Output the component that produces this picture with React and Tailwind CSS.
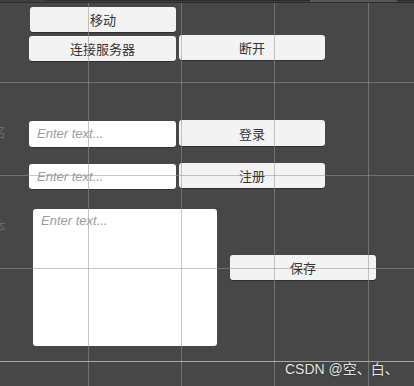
import React from "react";

const cjk = { fontFamily: '"Noto Sans CJK SC", "Noto Sans", sans-serif' };

function Btn({ children, className = "" }) {
  return (
    <div
      className={`flex items-center justify-center rounded-[3px] bg-[#f3f3f3] text-[13px] leading-none text-[#333333] shadow-[0_1px_0_#2e2e2e] ${className}`}
      style={cjk}
    >
      {children}
    </div>
  );
}

function Input({ className = "" }) {
  return (
    <div
      className={`flex items-center rounded-[3px] bg-white pl-[8px] text-[13px] italic text-[#9c9c9c] shadow-[0_1px_0_#333] ${className}`}
      style={{ fontFamily: '"Liberation Sans", Arial, sans-serif' }}
    >
      Enter text...
    </div>
  );
}

function Label({ text, className = "" }) {
  return (
    <div
      className={`flex w-[6px] shrink-0 justify-end overflow-hidden whitespace-nowrap text-[13px] leading-[16px] text-[#6a6a6a] ${className}`}
      style={cjk}
    >
      {text}
    </div>
  );
}

export default function App() {
  return (
    <div className="relative h-[386px] w-[414px] overflow-hidden bg-[#474747]">
      {/* top strip */}
      <div className="flex h-[3px] w-full">
        <div className="h-[3px] w-[46px] border-b border-[#2c2c2c] bg-[#3e3e3e]" />
        <div className="h-[3px] w-[264px] border-t border-b border-t-[#2c2c2c] border-b-[#2c2c2c] bg-[#3e3e3e]" />
        <div className="h-[3px] w-[87px] border-b border-[#2c2c2c] bg-[#575757]" />
        <div className="h-[3px] flex-1 border-t border-b border-t-[#2c2c2c] border-b-[#2c2c2c] bg-[#3e3e3e]" />
      </div>

      <div className="flex flex-col">
        <div className="ml-[30px] mt-[4px]">
          <Btn className="h-[25px] w-[146px]">移动</Btn>
        </div>

        <div className="ml-[29px] mt-[3px] flex items-start gap-[3px]">
          <Btn className="mt-[1px] h-[25px] w-[147px]">连接服务器</Btn>
          <Btn className="h-[25px] w-[146px]">断开</Btn>
        </div>

        <div className="mt-[59px] flex items-start">
          <Label text="用户名" className="mt-[4px]" />
          <div className="ml-[23px] flex items-start gap-[3px]">
            <Input className="mt-[1px] h-[26px] w-[147px]" />
            <Btn className="h-[26px] w-[146px]">登录</Btn>
          </div>
        </div>

        <div className="mt-[16px] flex items-start">
          <div className="ml-[29px] flex items-start gap-[3px]">
            <Input className="mt-[1px] h-[25px] w-[147px]" />
            <Btn className="h-[25px] w-[146px]">注册</Btn>
          </div>
        </div>

        <div className="mt-[20px] flex items-start">
          <Label text="文本" className="mt-[9px]" />
          <div className="ml-[27px] flex items-start gap-[13px]">
            <div
              className="h-[137px] w-[184px] rounded-[3px] bg-white pl-[8px] pt-[4px] text-[13px] italic leading-[16px] text-[#9c9c9c]"
              style={{ fontFamily: '"Liberation Sans", Arial, sans-serif' }}
            >
              Enter text...
            </div>
            <Btn className="mt-[46px] h-[25px] w-[146px]">保存</Btn>
          </div>
        </div>
      </div>

      {/* grid overlay */}
      <div className="pointer-events-none absolute inset-0">
        <div className="absolute bottom-0 left-[88px] top-[3px] w-px bg-[rgba(150,150,150,0.55)]" />
        <div className="absolute bottom-0 left-[181px] top-[3px] w-px bg-[rgba(150,150,150,0.55)]" />
        <div className="absolute bottom-0 left-[274px] top-[3px] w-px bg-[rgba(150,150,150,0.55)]" />
        <div className="absolute bottom-0 left-[368px] top-[3px] w-px bg-[rgba(150,150,150,0.55)]" />
        <div className="absolute left-0 right-0 top-[82px] h-px bg-[rgba(150,150,150,0.55)]" />
        <div className="absolute left-0 right-0 top-[175px] h-px bg-[rgba(150,150,150,0.55)]" />
        <div className="absolute left-0 right-0 top-[268px] h-px bg-[rgba(150,150,150,0.55)]" />
        <div className="absolute left-0 right-0 top-[361px] h-px bg-[rgba(190,190,190,0.8)]" />
      </div>

      {/* watermark */}
      <div
        className="absolute left-[285px] top-[360px] whitespace-nowrap text-[14px] leading-[18px] text-[#e6e6e6] [text-shadow:0_0_2px_rgba(0,0,0,0.6)]"
        style={{ fontFamily: '"Liberation Sans", "Noto Sans CJK SC", sans-serif' }}
      >
        CSDN @空、白、
      </div>
    </div>
  );
}
